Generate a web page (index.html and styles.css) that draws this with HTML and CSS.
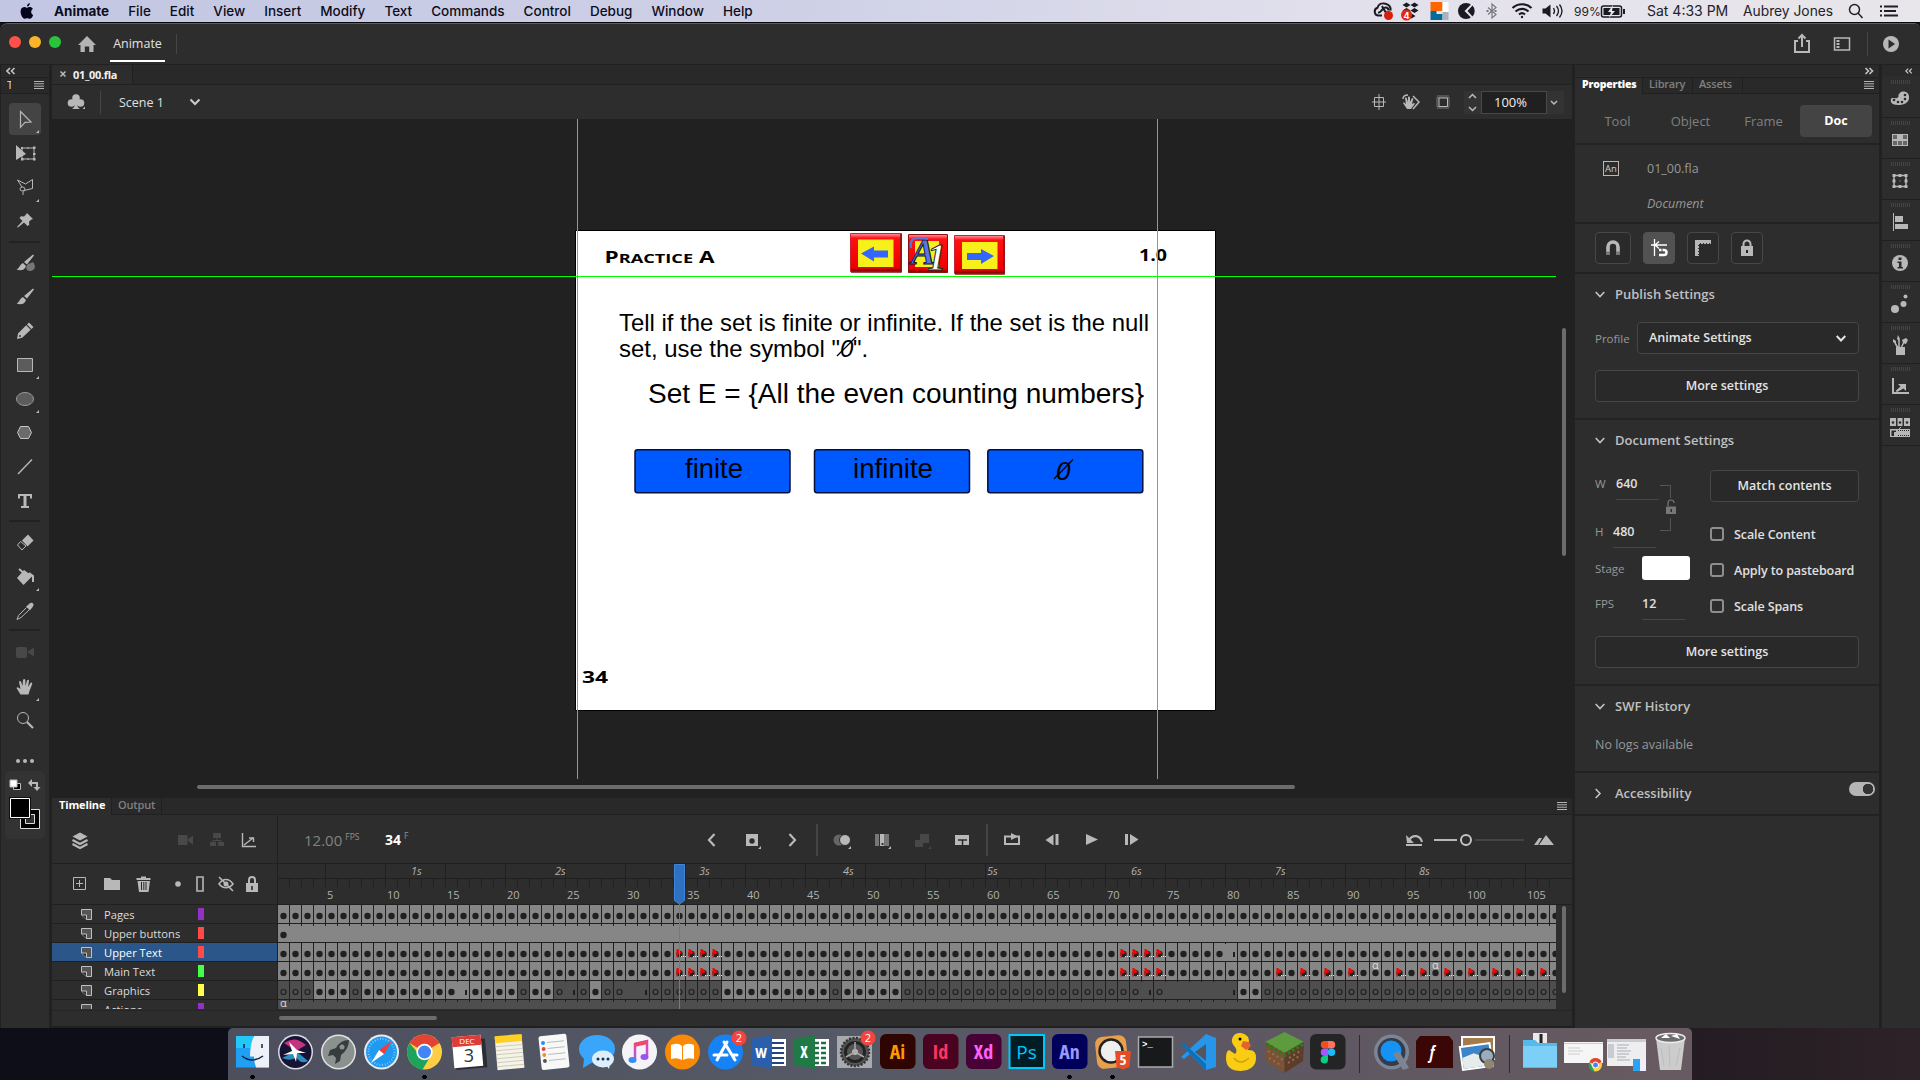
FILE: index.html
```html
<!DOCTYPE html>
<html lang="en">
<head>
<meta charset="utf-8">
<title>Animate</title>
<link rel="stylesheet" href="styles.css">
</head>
<body>
<header class="menubar">
  <svg class="apple" width="14" height="18" viewBox="0 0 14 18"><path fill="#05051c" d="M9.8 1C8.200 1.300 6.900 2.800 7 4.600 8.700 4.500 10 2.800 9.800 1zM7.200 5.800C6.300 5.800 5.400 5 4.200 5 2 5.100.6 7 .6 9.600.6 12.900 2.600 16.800 4.600 16.800 5.600 16.800 6 16.200 7.200 16.200 8.500 16.200 8.800 16.800 9.800 16.800 11.300 16.800 12.700 14.500 13.200 12.900 10.700 11.800 10.500 8.200 12.900 6.900 12 5.700 10.900 5.100 9.900 5.100 8.700 5.100 8 5.800 7.200 5.800z"/></svg>
  <nav class="menus"><b>Animate</b><span>File</span><span>Edit</span><span>View</span><span>Insert</span><span>Modify</span><span>Text</span><span>Commands</span><span>Control</span><span>Debug</span><span>Window</span><span>Help</span></nav>
  <div class="status">
    <svg width="262" height="22" viewBox="0 0 262 22" fill="none" stroke="#1a1a22" stroke-width="2">
      <path d="M9 15.500H5.500a4 4 0 0 1-1-7.800c1-3.500 4.500-5 8-4 4 1 5.500 4 5 7M5 12.500c3 1 4-5 7.500-5 2 0 3 1.500 3 3M9 6q3 6 5 7"/><circle cx="15.500" cy="15.500" r="4.500" fill="#d81e06" stroke="none"/>
      <g transform="translate(-3.500 0)">
      <g stroke="none" fill="#1a1a22"><path d="M33 5l4-2.500L41 5l-4 2.500zM41 5l4-2.500L49 5l-4 2.500zM33 10.500L37 8l4 2.500-4 2.500zM41 10.500L45 8l4 2.500-4 2.500zM38 16l4-2.500 4 2.500-4 2.500z"/><circle cx="37" cy="15" r="5.500" fill="#e0281a"/>
      <path fill="#dfe6ec" d="M61 2h18v18H61z"/><path fill="#f60" d="M61 2h12v9H61z"/><path fill="#056a9c" d="M61 11h6v9h-6zM67 14h6v6h-6z"/><path fill="#fff" d="M73 2h6v10h-6z"/><path fill="#a9b3bd" d="M73 12h6v8h-6z"/>
      <circle cx="96.500" cy="11" r="8"/><path fill="#e6e3ec" d="M103 3l-8 8 8 8 2-8z"/><path fill="#1a1a22" d="M103 5.500L98 11l5 5.500a8 8 0 0 0 0-11z"/></g>
      <path stroke="#777782" stroke-width="1.200" d="M118.500 7.500l8 7-4 3.500V4l4 3.500-8 7"/><path stroke="#777782" stroke-dasharray="2 2" d="M117 11h12"/>
      <path stroke-width="2.200" d="M143 8c5.500-5 14-5 19 0M146 11.500c4-3.500 9.500-3.500 13 0M149.500 14.500c2-1.700 4-1.700 6 0"/><circle cx="152.500" cy="17" r="1.200" fill="#1a1a22" stroke="none"/>
      <path stroke="none" fill="#1a1a22" d="M173 8.500h3l5-4v13l-5-4h-3z"/><path stroke-width="1.300" d="M184 8q2 3 0 6M187 6q4 5 0 10M190 4.500q5 6.500 0 13"/>
      <rect x="232" y="6" width="20" height="11" rx="2" stroke-width="1.500"/><rect x="234" y="8" width="16" height="7" fill="#1a1a22" stroke="none"/><path stroke="none" fill="#e9e6ee" d="M243.500 5l-5 7h3l-2 6 6-7h-3z"/><path d="M254.500 9v5"/>
      </g>
      <text x="33.500" y="18.500" class="tinybadge">4</text><text x="201" y="15.500" class="pct">99%</text>
    </svg>
    <span class="clock">Sat 4:33 PM</span><span class="user">Aubrey Jones</span>
    <svg width="52" height="22" viewBox="3 0 52 22" fill="none" stroke="#1f1f26" stroke-width="1.500"><circle cx="9.500" cy="9.500" r="5"/><path d="M13 13l4.500 5"/><g stroke-width="2"><path d="M35 6.500h2M39 6.500h14M35 11h2M39 11h12M35 15.500h2M39 15.500h14"/></g></svg>
  </div>
</header>

<main class="window">
  <div class="titlebar">
    <i class="light red"></i><i class="light amber"></i><i class="light green"></i>
    <svg class="home" width="18" height="16" viewBox="0 0 18 16"><path fill="#b4b4b4" d="M9 0l9 9h-2.500v7h-4.300v-5.500H6.800V16H2.500V9H0z"/></svg>
    <span class="apptab">Animate</span><i class="vline"></i>
    <svg class="titleright" width="110" height="24" viewBox="0 0 110 24" fill="none" stroke="#b8b8b8" stroke-width="2"><path d="M6 9H3v11h14V9h-3M10 15V3M6.500 6.500L10 3l3.500 3.500"/><path stroke-width="1.500" d="M42.500 6h15v12h-15z"/><path stroke="#b8b8b8" stroke-width="3" stroke-dasharray="2 1" d="M46 8v8"/><path stroke="#444" stroke-width="1" d="M75.500 0v24"/><circle cx="99" cy="12" r="8" fill="#b8b8b8" stroke="none"/><path fill="#2b2b2b" stroke="none" d="M96.500 7.500l6.500 4.500-6.500 4.500z"/></svg>
  </div>

  <div class="body">
    <aside class="tools">
      <div class="strip"><svg width="10" height="8" viewBox="0 0 10 8" class="st2"><path d="M4 1L1 4l3 3M8.500 1l-3 3 3 3"/></svg></div>
      <div class="tooltab"><span>T</span><svg width="10" height="8" viewBox="0 0 10 8" class="burger"><path d="M0 .5h10M0 2.800h10M0 5.200h10M0 7.500h10"/></svg></div>
      <div class="toollist">
        <svg class="tool on" viewBox="1 1 32 32"><path class="l" stroke="#fff" stroke-width="1.200" d="M12.500 9.500l10.500 10.500-6 .3-4.500 5z"/><path class="f" d="M31 28v3h-3z"/></svg>
        <svg class="tool" viewBox="0 0 34 34"><path class="f" d="M8 8l10 9-10 6z"/><path class="l" d="M14 11h12v11H14zM20 10v2M20 21v2"/><path class="f" d="M13 10h2v2h-2zM25 9.500h2.500V12H25zM25 16h2.500v2H25zM13 21h2.500v2.500H13zM25 21h2.500v2.500H25z"/></svg>
        <svg class="tool" viewBox="0 0 34 34"><path class="l" d="M14 16L9.500 9l8 4 7-4.500v9L14 20a2.500 2 0 1 1 3-2c0 2-3 3-2 6"/><path class="f" d="M31 28v3h-3z"/></svg>
        <svg class="tool" viewBox="0 1 34 34"><path class="f" d="M19 9l6 6-2 .8-2 2 .3 3-1.800 1.200-3.500-3.500-6 5-1-.5 5.500-6-3-3 1.500-1.700 3 .2 2-2z"/></svg>
        <i class="sep"></i>
        <svg class="tool" viewBox="0 0 34 34"><path fill="#777" d="M25 16c4 5 1 9-3 9s-5-4-2-7c2-1 4-1 5-2z"/><path class="f" d="M25 8.500l1 1-7 9-3-2.500zM15 17l3 3c-1 4-5 5-9.500 3.500 3-1 3-5 6.500-6.500z"/></svg>
        <svg class="tool" viewBox="0 0 34 34"><path class="f" d="M25 8.500l1 1-7 9-3-2.500zM15 17l3 3c-1 4-5 5-9.500 3.500 3-1 3-5 6.500-6.500z"/></svg>
        <svg class="tool" viewBox="0 0 34 34"><path class="f" d="M21 8.500l4.500 4.500-2 2-4.500-4.500zM18.200 11.300l4.500 4.500-8.500 8L9 25l1-5.500z"/><circle cx="12" cy="22" r="1" fill="#333"/></svg>
        <svg class="tool" viewBox="0 0 34 34"><path fill="#5c5c5c" stroke="#b8b8b8" d="M9.500 10.500h15v13h-15z"/><path class="f" d="M31 28v3h-3z"/></svg>
        <svg class="tool" viewBox="0 0 34 34"><ellipse cx="17" cy="17" rx="8.500" ry="6.500" fill="#5c5c5c" stroke="#9a9a9a"/><path class="f" d="M31 28v3h-3z"/></svg>
        <svg class="tool" viewBox="0 0 34 34"><path fill="#6b6b6b" stroke="#c4c4c4" d="M9.500 16.500l3-6h8l3 6-3 6h-8z"/></svg>
        <svg class="tool" viewBox="0 0 34 34"><path class="l" stroke-width="1.400" d="M10 24L24 9.500"/></svg>
        <svg class="tool" viewBox="0 0 34 34"><path class="f" d="M10 10h14v4.500h-2V12h-3.500v10h2.500v2h-8v-2h2.500V12H12v2.500h-2z"/></svg>
        <i class="sep"></i>
        <svg class="tool" viewBox="0 0 34 34"><path class="f" d="M20 9.500l5.500 6-6 6-5.500-6z"/><path class="l" d="M12.500 16.500L9.500 20l4.500 5 4-4z"/></svg>
        <svg class="tool" viewBox="0 -1 34 34"><path class="f" d="M16 10l8.500 6-9 9L9 18z"/><path class="l" stroke-width="2" d="M11 9l6 5M21 13l4 3v6"/><path class="f" d="M31 28v3h-3z"/></svg>
        <svg class="tool" viewBox="0 -1 34 34"><path class="f" d="M18 12.500l1.500-1 2-2c3-2 5 1 3.500 3l-2 2.500-1 1.500z"/><path class="l" d="M18.500 13.500l-8 8-1.500 4 4-2 8-7.500"/></svg>
        <i class="sep big"></i>
        <svg class="tool" viewBox="0 0 34 34"><rect x="8" y="12" width="11" height="11" rx="2" fill="#484848"/><path fill="#484848" d="M19 17l7-4.500v9z"/></svg>
        <svg class="tool" viewBox="0 -1 34 34"><path class="f" d="M12.500 24.500L8.500 18c1-1.500 2 0 4 1L11 12c.5-1.500 1.700-1.200 2.200 0l1.300 4L15 10c.5-1.500 2-1.500 2.300 0l.2 6 1.500-5.500c.6-1.300 2-1 2 .5L20 17l2.500-4c1-1 2.200 0 1.600 1.300L21.500 21l-1 3.500z"/><path class="f" d="M31 28v3h-3z"/></svg>
        <svg class="tool" viewBox="0 0 34 34"><circle class="l" cx="15" cy="15" r="5.500"/><path class="l" stroke-width="2.200" d="M19 19l6 6"/></svg>
        <svg class="tool" viewBox="0 0 34 34"><g class="f"><circle cx="10" cy="24" r="2"/><circle cx="17" cy="24" r="2"/><circle cx="24" cy="24" r="2"/></g></svg>
      </div>
      <svg class="colors" width="40" height="68" viewBox="0 0 40 68"><path fill="#000" stroke="#bbb" d="M8.500 12.500h7v6h-7z"/><path fill="#fff" stroke="#bbb" d="M5 9h7v7H5z"/><path class="l" stroke-width="2" d="M26 12h6v7"/><path class="f" d="M27 8v8l-4-4zM28.500 16h7l-3.500 4z"/><path fill="#000" stroke="#ddd" d="M15.500 38.500h19v19h-19z"/><path fill="#333" stroke="#ddd" d="M20.500 43.500h9v9h-9z"/><path fill="#000" stroke="#111" stroke-width="3" d="M5.500 27.500h19v19h-19z"/><path fill="#000" stroke="#fff" d="M5.500 27.500h19v19h-19z"/></svg>
    </aside>

    <section class="center">
      <div class="doctabs"><div class="doctab"><svg width="6" height="6" viewBox="0 0 6 6"><path stroke="#bbb" stroke-width="1.500" d="M.5.500l5 5M5.500.500l-5 5"/></svg><b>01_00.fla</b></div></div>
      <div class="scenebar">
        <svg width="20" height="20" viewBox="0 0 20 20" class="club"><g class="f"><circle cx="10" cy="6" r="3.800"/><circle cx="5.500" cy="11" r="3.800"/><circle cx="14.500" cy="11" r="3.800"/><path d="M9 8h2c0 5 0 7 3 9H6c3-2 3-4 3-9zM19 14.500V17h-2.500z"/></g></svg>
        <i class="vline"></i><span class="scene">Scene 1</span>
        <svg width="12" height="8" viewBox="0 0 12 8"><path fill="none" stroke="#ccc" stroke-width="2" d="M1.500 1.500L6 6l4.500-4.500"/></svg>
        <svg class="sceneicons" width="86" height="24" viewBox="0 0 86 24"><path class="l" d="M8.500 7.500h9v9h-9zM13 4v16M6 12h14"/><path class="f" d="M41 19l-4-6c1-1 2 0 3 1l-1-6c1-1 2 0 2 1l1 3V7c1-1 2 0 2 1v4l2-4c1 0 2 1 1 2l-1 4 2-1c1 0 1 1 0 2l-3 4z"/><path class="l" stroke-width="1.500" d="M37 9q0-4 5-4M47 6l6 6-6 7"/><path stroke="#777" stroke-width="3" stroke-dasharray="1 1" fill="none" d="M71.500 6.500h11v11h-11z"/><path class="l" d="M73 8h8.500v8.500H73z"/></svg>
        <div class="zoombox"><svg width="17" height="23" viewBox="0 0 17 23"><path fill="none" stroke="#bbb" stroke-width="1.500" d="M5 7l3.500-3.500L12 7M5 16l3.500 3.500L12 16"/></svg><span>100%</span><svg width="17" height="23" viewBox="0 0 17 23"><path fill="none" stroke="#bbb" stroke-width="1.500" d="M4 10l3 3 3-3"/></svg></div>
      </div>
      <svg class="pasteboard" width="1520" height="677" viewBox="52 119 1520 677">
        <defs><linearGradient id="bev" x1="0" y1="0" x2="0" y2="1"><stop offset="0" stop-color="#f9a"/><stop offset=".12" stop-color="#f11"/><stop offset=".9" stop-color="#e00"/><stop offset="1" stop-color="#700"/></linearGradient></defs>
        <path fill="#fff" stroke="#000" d="M575.500 230.500h640v480h-640z"/>
        <g class="copper"><text x="604.500" y="263" textLength="110" lengthAdjust="spacingAndGlyphs" font-size="15.500">P<tspan font-size="12.500">RACTICE</tspan> A</text><text x="1139" y="261" font-size="15.500" textLength="28" lengthAdjust="spacingAndGlyphs">1.0</text><text x="582" y="682.500" font-size="16" textLength="26" lengthAdjust="spacingAndGlyphs">34</text></g>
        <g>
          <path fill="url(#bev)" stroke="#c23" d="M850.500 233.500h51v38h-51z"/><path stroke="#811" stroke-width="1.500" d="M901 234v38h-50" fill="none"/><path fill="#f7f01a" d="M858 239.500h35.500v27.500H858z"/><path fill="#36f" d="M861 253.500l13-7v4h14v7h-14v4z"/>
          <path fill="url(#bev)" stroke="#811" d="M908.500 234.500h39v38h-39z"/><path fill="#f7f01a" d="M915 241h24v26h-24z"/>
          <text class="swash" x="911" y="264" font-size="36" textLength="24" lengthAdjust="spacingAndGlyphs">A</text><text class="swash one" x="927" y="270" font-size="38">1</text>
          <path fill="none" stroke="#5b76e0" stroke-width="2" d="M911 248q-2-11 9-10l8 1"/>
          <path fill="url(#bev)" stroke="#c23" d="M954.500 235.500h50v38h-50z"/><path stroke="#811" stroke-width="1.500" d="M1004 236v38h-49" fill="none"/><path fill="#f7f01a" d="M962 242h35.500v27H962z"/><path fill="#36f" d="M994 256l-13-7v4h-14v7h14v4z"/>
        </g>
        <g class="helv"><text x="619" y="331" font-size="24" textLength="530" lengthAdjust="spacingAndGlyphs">Tell if the set is finite or infinite. If the set is the null</text>
          <text x="619" y="357" font-size="24" textLength="221" lengthAdjust="spacingAndGlyphs">set, use the symbol "</text><text x="840" y="357" font-size="24" class="it">0</text><text x="853" y="357" font-size="24">".</text><path stroke="#000" stroke-width="1.300" d="M837 356l19-19"/>
          <text x="648" y="402.500" font-size="27" textLength="496" lengthAdjust="spacingAndGlyphs">Set E = {All the even counting numbers}</text>
          <g fill="#0058ff" stroke="#03103c" stroke-width="1.500"><rect x="635" y="449.800" width="155" height="43" rx="2.500"/><rect x="814.500" y="449.800" width="155" height="43" rx="2.500"/><rect x="987.800" y="449.800" width="155" height="43" rx="2.500"/></g>
          <text x="685" y="477.500" font-size="27" textLength="58" lengthAdjust="spacingAndGlyphs">finite</text><text x="853" y="477.500" font-size="27" textLength="80" lengthAdjust="spacingAndGlyphs">infinite</text><text x="1056" y="479.500" font-size="26" class="it">0</text><path stroke="#000" stroke-width="1.300" d="M1054 479l19-19.500"/>
        </g>
        <path stroke="#0f0" fill="none" d="M577.500 119v660M1157.500 119v660M52 276.500h1504"/>
        <g fill="#6c6c6c"><rect x="1562" y="328" width="4" height="228" rx="2"/><rect x="197" y="785" width="1098" height="4" rx="2"/></g>
      </svg>
      <div class="timeline">
        <div class="tltabs"><b>Timeline</b><span>Output</span><svg width="10" height="8" viewBox="0 0 10 8" class="burger"><path d="M0 .5h10M0 2.800h10M0 5.200h10M0 7.500h10"/></svg></div>
        <div class="tlmain">
          <div class="tlleft">
            <svg class="tlicons" width="225" height="48" viewBox="52 815 225 48"><path class="f" d="M72.500 836.500l7.500-4 7.500 4-7.500 4z"/><path class="l" stroke-width="2" d="M72.500 840l7.500 4 7.500-4M72.500 844l7.500 4 7.500-4"/><g fill="#484848"><path d="M178 835h9.500v10H178zM187 840l6-4.500v9.500zM213 833h8v5h-8zM210 842h6v4h-6zM218 842h6v4h-6z"/></g><path stroke="#484848" d="M217 838v3M213 842v-1.500h8v1.500" fill="none"/><path class="l" stroke-width="1.400" d="M242.500 833v13.500H256M244 845l9-7M249 838h4.500v4"/></svg>
            <svg class="tlicons" width="225" height="40" viewBox="52 864 225 40"><path class="l" d="M73.500 877.500h12v12h-12zM79.500 880v7M76 883.500h7"/><path class="f" d="M104 878h6l2 2h8v10h-16zM136.500 878h14v2h-14zM141 876.500h5v2h-5zM137.500 881h12.500l-1.500 11h-9.500z"/><path stroke="#2b2b2b" d="M141.500 882v8M143.800 882v8M146 882v8"/><circle class="f" cx="178" cy="884" r="2.800"/><path class="l" stroke-width="1.600" d="M197 877h6v14h-6z"/><path class="l" stroke-width="1.600" d="M219 884c4-6 10-6 14 0-4 5-10 5-14 0zM219 877l14 14"/><circle class="f" cx="226" cy="884" r="2.500"/><path class="f" d="M246 883h12v9h-12z"/><path class="l" stroke-width="2" d="M249 883v-3a3 3 0 0 1 6 0v3"/><path fill="#222" d="M251.300 886h1.500v4h-1.500z"/></svg>
            <div class="layers" id="layers"></div>
          </div>
          <div class="tlright">
            <div class="tlbar">
              <span class="fps">12.00<sup>FPS</sup></span><span class="cur">34<sup>F</sup></span>
              <svg class="ctl" width="460" height="48" viewBox="692 815 460 48"><path class="l" stroke-width="2.200" d="M714.500 834l-5.500 6 5.500 6M789.500 834l5.500 6-5.500 6"/><path class="f" d="M746 834h12v12h-12zM761 846v3h-3zM851 846v3h-3zM891 846v3h-3z"/><circle cx="752" cy="841" r="2.700" fill="#2b2b2b"/><path stroke="#444" stroke-width="2" d="M817 824v32M987 824v32"/><circle cx="839" cy="840" r="5.500" fill="#666"/><circle cx="845" cy="840" r="5.500" class="f" stroke="#2b2b2b"/><path fill="#777" d="M875 834h4v12h-4zM885 834h4v12h-4z"/><path class="f" d="M880 834h4.500v12H880z"/><path fill="#333" d="M881.500 843h2v2h-2z"/><path fill="#484848" d="M915 840h8v7h-8zM920 834h9v9h-9zM931 846v3h-3z"/><path class="f" d="M955 835h14v10h-14z"/><path fill="none" stroke="#2b2b2b" stroke-width="1.500" d="M958 840h9M962.500 840v5"/><path class="l" stroke-width="2" d="M1011 836.500h-6v7.500h14v-7.500h-6"/><path class="f" d="M1011 833l7 3.500-7 3.500zM1045.500 840l8-5.500v11zM1055.500 834h3v11h-3zM1086 834l12 5.500-12 5.500zM1125 834h3v11h-3zM1130 834l8.500 5.500-8.500 5.500z"/></svg>
              <svg class="zoomctl" width="180" height="48" viewBox="1392 815 180 48"><path class="l" stroke-width="2.200" d="M1409 840c4-6 11-5 13 2"/><path class="f" d="M1406 835l1 8h7zM1406 844h16v2h-16z"/><path stroke="#b8b8b8" stroke-width="2" d="M1434 840h23"/><path stroke="#444" stroke-width="2" d="M1475 840h49"/><circle cx="1466" cy="840" r="5" fill="none" stroke="#c4c4c4" stroke-width="2"/><path class="f" d="M1534 845l5-7h3l-4 7zM1539 845l7-10 8 10z"/></svg>
            </div>
            <svg id="frames" width="1294" height="147" viewBox="278 863 1294 147"></svg>
          </div>
        </div>
        <div class="tlfoot"><i></i></div>
      </div>
    </section>

    <aside class="props">
      <div class="strip right"><svg width="10" height="8" viewBox="0 0 10 8" class="st2"><path d="M1.500 1l3 3-3 3M5.500 1l3 3-3 3"/></svg></div>
      <div class="ptabs"><b>Properties</b><span>Library</span><span class="as">Assets</span><svg width="10" height="8" viewBox="0 0 10 8" class="burger"><path d="M0 .5h10M0 2.800h10M0 5.200h10M0 7.500h10"/></svg></div>
      <div class="sect seg"><span>Tool</span><span>Object</span><span>Frame</span><b>Doc</b></div>
      <div class="sect docinfo"><i class="an">An</i><div><p>01_00.fla</p><em>Document</em></div></div>
      <div class="sect snaps">
        <span class="wide"><svg width="34" height="30" viewBox="0 0 34 30"><path class="l" stroke-width="3.600" d="M12 21v-7a5 5 0 0 1 10 0v7"/><path fill="#777" d="M10 18.500h4V22h-4zM20 18.500h4V22h-4z"/></svg></span>
        <span class="act"><svg width="30" height="30" viewBox="0 0 30 30" fill="none" stroke="#fff"><path d="M10.500 6v17M7 12h16M15 8.500L11 12l4 3.500" stroke-width="1.300"/><path stroke-width="2.500" d="M15 17h5a2.500 2.500 0 0 1 0 5h-5" stroke-dasharray="2.500 1 20"/></svg></span>
        <span><svg width="30" height="30" viewBox="0 0 30 30"><path class="f" d="M7 7h16v4H11v12H7z"/><path stroke="#333" stroke-dasharray="1 2" d="M12 10.500h11M10.500 12v11"/></svg></span>
        <span><svg width="30" height="30" viewBox="0 0 30 30"><path class="f" d="M9 13h12v10H9z"/><path class="l" stroke-width="2" d="M11.500 13v-2a3.500 3.500 0 0 1 7 0v2"/><path fill="#222" d="M14 17h2v3h-2z"/></svg></span>
      </div>
      <div class="sect pub">
        <h3><svg width="10" height="7" viewBox="0 0 10 7" class="st2"><path d="M.7 1L5 5.500 9.300 1"/></svg>Publish Settings</h3>
        <div class="profile"><label>Profile</label><div class="btn select">Animate Settings<svg width="10" height="7" viewBox="0 0 10 7"><path fill="none" stroke="#e4e4e4" stroke-width="2" d="M.7 1L5 5.500 9.300 1"/></svg></div></div>
        <div class="btn">More settings</div>
      </div>
      <div class="sect docset">
        <h3><svg width="10" height="7" viewBox="0 0 10 7" class="st2"><path d="M.7 1L5 5.500 9.300 1"/></svg>Document Settings</h3>
        <div class="fields">
          <div class="dims">
            <div class="dim"><label>W</label><span>640</span></div><div class="dim"><label class="h">H</label><span>480</span></div>
            <svg width="18" height="48" viewBox="0 0 18 48"><path fill="none" stroke="#555" d="M0 1.500h10.500V14M10.500 34v12.500H0"/><path fill="#777" d="M6 22.500h10V30H6z"/><path fill="none" stroke="#777" stroke-width="1.200" d="M8 22v-3a3 3 0 0 1 6 0"/><path fill="#2b2b2b" d="M10.500 25h1.500v3h-1.500z"/></svg>
          </div>
          <div class="pair"><label>Stage</label><i class="swatch"></i></div>
          <div class="pair"><label>FPS</label><span class="under">12</span></div>
          <div class="opts"><div class="btn">Match contents</div><div class="chk c1"><i></i>Scale Content</div><div class="chk"><i></i>Apply to pasteboard</div><div class="chk"><i></i>Scale Spans</div></div>
        </div>
        <div class="btn">More settings</div>
      </div>
      <div class="sect swf"><h3><svg width="10" height="7" viewBox="0 0 10 7" class="st2"><path d="M.7 1L5 5.500 9.300 1"/></svg>SWF History</h3><p>No logs available</p></div>
      <div class="sect acc"><h3><svg width="10" height="11" viewBox="0 0 10 11" class="st2"><path d="M.7 1L5 5.500.7 10"/></svg>Accessibility</h3><i class="toggle"></i></div>
    </aside>

    <aside class="dockstrip">
      <div class="strip right"><svg width="8" height="8" viewBox="0 0 10 8" class="st2"><path d="M4 1L1 4l3 3M8.500 1l-3 3 3 3"/></svg></div>
      <div class="cell"><svg viewBox="0 0 20 20"><path class="f" d="M10 4c0-2 8-3 9 3 1 8-7 9-11 9-6 0-8-3-7-6 1-2 4 0 6-1 3-1 0-3 3-5z"/><g fill="#2b2b2b"><circle cx="4" cy="11" r="1.300"/><circle cx="8" cy="13" r="1.300"/><circle cx="12" cy="13" r="1.300"/><circle cx="15" cy="10" r="1.300"/><circle cx="15" cy="6" r="1.300"/></g></svg></div>
      <div class="cell"><svg viewBox="0 0 20 20"><path class="f" d="M2 4h16v12H2z"/><path fill="#666" d="M3 5h4v4H3zM13 5h4v4h-4zM3 11h4v4H3zM8 11h4v4H8zM13 11h4v4h-4z"/></svg></div>
      <div class="cell"><svg viewBox="0 0 20 20"><path class="l" stroke-width="1.500" d="M4 4.500h12v11H4z"/><path class="f" d="M2.500 3h3v3h-3zM8.500 3h3v3h-3zM14.500 3h3v3h-3zM2.500 8.500h3v3h-3zM14.500 8.500h3v3h-3zM2.500 14h3v3h-3zM8.500 14h3v3h-3zM14.500 14h3v3h-3zM9.500 9.500h1v1h-1z"/></svg></div>
      <div class="cell"><svg viewBox="0 0 20 20"><path class="f" d="M3 1h1v18H3zM5 4h8v6H5zM5 12h13v5H5z"/></svg></div>
      <div class="cell"><svg viewBox="0 0 20 20"><circle class="f" cx="10" cy="10" r="8"/><path fill="#2b2b2b" d="M8.500 4.500h3v2.500h-3zM7.500 8.500h4V14h1.500v1.500H7.500V14H9v-4H7.500z"/></svg></div>
      <div class="cell"><svg viewBox="0 0 20 20"><g class="f"><circle cx="5" cy="15" r="4"/><circle cx="13.500" cy="10" r="3"/><circle cx="15.500" cy="2.500" r="2"/></g></svg></div>
      <div class="cell"><svg viewBox="0 0 20 20"><path class="f" d="M6 12h9v8H6zM8 0l2 4-1 2-2-2zM3 4l3 2 0 3-3-2zM12 5l4-2 2 2-2 4-3-1z"/><path class="l" stroke-width="1.500" d="M9 5v8M5 8l3 5M14 7l-3 6"/></svg></div>
      <div class="cell"><svg viewBox="0 0 20 20"><path class="l" stroke-width="2" d="M3 2v15h16"/><path class="f" d="M8 8h8v7l-2.500-2.500L7 16l-1.500-1 5-4.500z"/></svg></div>
      <div class="cell"><svg viewBox="0 0 20 20"><path class="f" d="M0 1h6v8H0zM7.500 1h5v8h-5zM14 1h6v8h-6z"/><g fill="#2b2b2b"><circle cx="3" cy="5.500" r="1.300"/><circle cx="10" cy="5.500" r="1.300"/><circle cx="17" cy="5.500" r="1.300"/></g><path class="f" d="M0 12h20v8H0z"/><path fill="#2b2b2b" d="M1.500 13.500H6V15H4v4H1.500z"/><path class="l" d="M5 16l6-6"/><path stroke="#2b2b2b" stroke-dasharray="1 1" d="M8 13.500h11M8 18.500h11"/></svg></div>
    </aside>
  </div>
</main>

<footer class="desktop">
  <div class="dock">
    <svg class="app run" viewBox="0 0 43 52"><path fill="#1fa0f5" d="M5 6h33v31.500H5z"/><path fill="#22c8f8" d="M5 6h17v12H5z"/><path fill="#eef1f8" d="M23 6h15v31.500H25q-2-6-2-11h-4Q19 14 23 6z"/><path fill="none" stroke="#10203c" stroke-width="1.500" d="M13 14v4M31 14v4M11 26q10 8 21 0"/></svg>
    <svg class="app" viewBox="0 0 43 52"><circle cx="21.500" cy="22" r="17.500" fill="#dcdce6"/><circle cx="21.500" cy="22" r="16" fill="#171334"/><path fill="#c2357e" d="M10 13q11-8 22 2l-10 6z"/><path fill="#2a8fc0" d="M8 28l14-7 12 10q-7 4-12-4-4 5-14 1z"/><path fill="#fff" d="M15 12l8 8 9 3-9 0-1 9-3-8-10 1 9-4z"/></svg>
    <svg class="app" viewBox="0 0 43 52"><circle cx="21.500" cy="22" r="17.500" fill="#e0e2e3"/><circle cx="21.500" cy="22" r="16" fill="#8a918f"/><path fill="#363d3f" d="M32 10q-9 0-13 8l-6 2-2 6 5-1 3 3-1 6 5-3 1-6q8-6 8-15z"/><circle cx="25" cy="17" r="2.500" fill="#8a918f"/></svg>
    <svg class="app" viewBox="0 0 43 52"><circle cx="21.500" cy="22" r="17.500" fill="#e8eaee"/><circle cx="21.500" cy="22" r="15.500" fill="#1f9af1"/><circle cx="21.500" cy="22" r="13" fill="none" stroke="#9ed6ff" stroke-dasharray=".7 2" stroke-width="2"/><path fill="#f23c36" d="M32 11L19 20l5 4z"/><path fill="#fff" d="M11 33l8-13 5 4z"/></svg>
    <svg class="app run" viewBox="0 0 43 52"><circle cx="21.500" cy="22" r="17.500" fill="#ffce44"/><path fill="#e44234" d="M21.500 22L6.500 13a17.500 17.500 0 0 1 30 0z"/><path fill="#1ca35c" d="M6.500 13a17.500 17.500 0 0 0 13 26.500L27 27l-8 1z"/><circle cx="21.500" cy="22" r="8.200" fill="#fff"/><circle cx="21.500" cy="22" r="6.500" fill="#4285f4"/></svg>
    <svg class="app" viewBox="0 0 43 52"><g transform="rotate(-5 21 22)"><path fill="#2a2d33" d="M9 10h31v29H9z"/><path fill="#fff" d="M7 6h29v31H7z"/><path fill="#dd3d38" d="M7 6h29v10H7z"/></g><text x="21" y="14" class="d" font-size="8" fill="#fff">DEC</text><text x="23" y="32" class="d" font-size="18" fill="#333">3</text></svg>
    <svg class="app" viewBox="0 0 43 52"><g transform="rotate(-5 21 22)"><path fill="#f5f2e7" d="M7 6h27v33H7z"/><path fill="#ffcf24" d="M7 5h27v7H7z"/><path stroke="#cfcabb" d="M7 15.500h27M7 19.500h27M7 23.500h27M7 27.500h27M7 31.500h27M7 35.500h27"/></g></svg>
    <svg class="app" viewBox="0 0 43 52"><g transform="rotate(-6 21 22)"><rect x="8" y="5" width="28" height="34" rx="2" fill="#f8f8f8"/><path stroke="#bbb" d="M16 12h17M16 18h17M16 24h17M16 30h17"/><circle cx="12" cy="12" r="2" fill="#2b8cf5"/><circle cx="12" cy="18" r="2" fill="#e84436"/><circle cx="12" cy="24" r="2" fill="#f0912c"/><circle cx="12" cy="30" r="2" fill="#555"/></g></svg>
    <svg class="app" viewBox="0 0 43 52"><ellipse cx="22" cy="19" rx="18" ry="14" fill="#39a5fb"/><path fill="#39a5fb" d="M9 28l-1 10 10-6z"/><ellipse cx="28" cy="29" rx="11" ry="8.500" fill="#dcefff"/><path fill="#dcefff" d="M31 35l3 4 1-5z"/><g fill="#20304a"><circle cx="23" cy="29" r="1.500"/><circle cx="28" cy="29" r="1.500"/><circle cx="33" cy="29" r="1.500"/></g></svg>
    <svg class="app" viewBox="0 0 43 52"><circle cx="21.500" cy="22" r="17.500" fill="#f4f4f8"/><path fill="none" stroke="#c850c8" stroke-width="2.500" d="M17 29V14l12-3v15"/><path fill="#f2466c" d="M16 13l14-3v4l-14 3z"/><ellipse cx="14.500" cy="30" rx="4" ry="3" fill="#3a8bf5"/><ellipse cx="26.500" cy="27" rx="4" ry="3" fill="#9a55f0"/></svg>
    <svg class="app" viewBox="0 0 43 52"><circle cx="21.500" cy="22" r="17.500" fill="#f98a06"/><path fill="#fff" d="M10 15q7-3 11 1v14q-5-3-11-1zM33 15q-7-3-11 1v14q5-3 11-1z"/></svg>
    <svg class="app" viewBox="0 0 43 52"><circle cx="21.500" cy="22" r="17.500" fill="#1583f6"/><path fill="none" stroke="#fff" stroke-width="3" stroke-linecap="round" d="M23 12L13 30M20 12l11 18M10 25h13M28 25h5"/><circle cx="35" cy="8" r="7.500" fill="#f4443e"/><text x="35" y="12" class="d" font-size="11" fill="#fff">2</text></svg>
    <svg class="app" viewBox="0 0 43 52"><path fill="#fff" d="M22 9h17v27H22z"/><path stroke="#24457f" stroke-width="2" d="M24 13h13M24 18h13M24 23h13M24 28h13M24 33h13"/><path fill="#2a5fae" d="M4 9l21-4v34L4 35z"/><text x="14" y="28" class="d b" font-size="15" fill="#fff">W</text></svg>
    <svg class="app" viewBox="0 0 43 52"><path fill="#fff" d="M22 9h17v27H22z"/><path stroke="#1e7145" stroke-width="2.500" stroke-dasharray="5 2" d="M24 13h13M24 18h13M24 23h13M24 28h13M24 33h13"/><path fill="#1f7a46" d="M4 9l21-4v34L4 35z"/><text x="14" y="28" class="d b" font-size="16" fill="#fff">X</text></svg>
    <svg class="app" viewBox="0 0 43 52"><path fill="#a7abad" d="M4 6h35v32H4z"/><circle cx="22" cy="22" r="14" fill="#555" stroke="#333" stroke-width="2.500" stroke-dasharray="2 1.500"/><circle cx="22" cy="22" r="9.500" fill="none" stroke="#222" stroke-width="3"/><circle cx="22" cy="22" r="3" fill="#bbb"/><path stroke="#aaa" stroke-width="1.500" d="M22 22V12M22 22l9 5M22 22l-9 5"/><circle cx="35" cy="8" r="7.500" fill="#f4443e"/><text x="35" y="12" class="d" font-size="11" fill="#fff">2</text></svg>
    <svg class="app" viewBox="0 0 43 52"><rect x="4" y="4" width="35.500" height="35" rx="6" fill="#2e0500"/><text x="21.500" y="29" class="d b" font-size="20" fill="#ff9a00">Ai</text></svg>
    <svg class="app" viewBox="0 0 43 52"><rect x="4" y="4" width="35.500" height="35" rx="6" fill="#49021f"/><text x="21.500" y="29" class="d b" font-size="20" fill="#ff3366">Id</text></svg>
    <svg class="app" viewBox="0 0 43 52"><rect x="4" y="4" width="35.500" height="35" rx="6" fill="#470137"/><text x="21.500" y="29" class="d b" font-size="20" fill="#ff61f6">Xd</text></svg>
    <svg class="app" viewBox="0 0 43 52"><rect x="4.500" y="5" width="34.500" height="33" fill="#001d26" stroke="#00c8ff" stroke-width="2"/><text x="21.500" y="29" class="d" font-size="19" fill="#00c8ff">Ps</text></svg>
    <svg class="app run" viewBox="0 0 43 52"><rect x="4" y="4" width="35.500" height="35" rx="6" fill="#00005b"/><text x="21.500" y="29" class="d b" font-size="20" fill="#9999ff">An</text></svg>
    <svg class="app run" viewBox="0 0 43 52"><rect x="5" y="6" width="31" height="32" rx="7" fill="#e8a04e" transform="rotate(-6 21 22)"/><circle cx="20" cy="21" r="11.500" fill="#efefef" stroke="#222" stroke-width="2.500"/><path fill="#e44d26" d="M24 21h16l-1.500 16-6.500 2.500-6.500-2.500z"/><text x="32" y="35" class="d b" font-size="15" fill="#fff">5</text></svg>
    <svg class="app" viewBox="0 0 43 52"><path fill="#18191a" stroke="#a9abad" stroke-width="1.500" d="M4.500 7h34v30h-34z"/><text x="8" y="17" font-size="9" fill="#fff" class="m">&gt;_</text></svg>
    <svg class="app" viewBox="0 0 43 52"><path fill="#2596ea" d="M29 4l10 4v29l-10 3-16-16-6 5-3-2 25-23z"/><path fill="#0f70b8" d="M4 15l3-2 22 21v6z"/><path fill="#54565f" d="M29 14v17L18 22z"/></svg>
    <svg class="app" viewBox="0 0 43 52"><path fill="#f8cd14" d="M12 9q2-7 9-6 9 1 8 12 0 4-2 5 10-1 9 9-1 11-15 12Q6 41 6 28q0-7 3-8l6 4q3-3 0-7-4-4-3-8z"/><path fill="#e5622a" d="M23 11l6 1 2 4-5 4-5-4z"/><circle cx="20" cy="9" r="1.500"/><path fill="none" stroke="#d59c09" stroke-width="1.500" d="M14 28q6 8 15 0"/></svg>
    <svg class="app" viewBox="0 0 43 52"><path fill="#5d9b3e" d="M21.500 2L41 12 21.500 23 2 12z"/><path fill="#7a5236" d="M2 12l19.500 11v20L3 31z"/><path fill="#5d3c28" d="M41 12L21.500 23v20L40 31z"/><path fill="none" stroke="#3d7026" stroke-width="4" stroke-dasharray="3 2" d="M3 14l18.500 11L40 14"/><path fill="none" stroke="#96704d" stroke-width="2" stroke-dasharray="2 3" d="M5 21l15 9M6 28l13 8M25 33l13-8M26 28l13-8"/></svg>
    <svg class="app" viewBox="0 0 43 52"><rect x="4" y="4" width="35.500" height="35.500" rx="6" fill="#242424"/><path fill="#f24e1e" d="M22 11h-3.500a3.700 3.700 0 0 0 0 7.500H22z"/><path fill="#ff7262" d="M22 11h3.500a3.700 3.700 0 0 1 0 7.500H22z"/><path fill="#a259ff" d="M22 18.500h-3.500a3.700 3.700 0 0 0 0 7.500H22z"/><circle cx="25.500" cy="22.300" r="3.700" fill="#1abcfe"/><path fill="#0acf83" d="M22 26h-3.500a3.700 3.700 0 1 0 3.500 4z"/></svg>
    <i class="bar"></i>
    <svg class="app" viewBox="0 0 43 52"><circle cx="21.500" cy="22" r="17.500" fill="#7d8594"/><circle cx="21.500" cy="22" r="14" fill="#333b4c"/><circle cx="21" cy="21" r="10.500" fill="#1593f5"/><path fill="#7d8594" d="M23 24l6-3 10 17-6 2z"/></svg>
    <svg class="app" viewBox="0 0 43 52"><path fill="#3a0606" d="M7 6h29l4 5v27H3V11z"/><text x="19" y="29" class="d it b" font-size="17" fill="#fff">f</text></svg>
    <svg class="app" viewBox="0 0 43 52"><path fill="#a57b4b" stroke="#fff" stroke-width="2" d="M6 7h32v22H6z"/><g transform="rotate(-8 20 25)"><path fill="#3d85c8" stroke="#fff" stroke-width="2" d="M5 15h30v23H5z"/><path fill="#e4ecec" d="M6 26l12-3 16 8v6H6z"/></g><circle cx="31" cy="26" r="7" fill="#9aacbd" stroke="#3b3d40" stroke-width="2"/><circle cx="33" cy="34" r="5" fill="#8f8771"/></svg>
    <i class="bar"></i>
    <svg class="app" viewBox="0 0 43 52"><path fill="#e9e9e9" d="M14 3h14v12H14z"/><path stroke="#222" stroke-width="3" d="M22 4v9"/><path fill="#57b9ea" d="M4 10h12l3 3h19v25H4z"/><path fill="#7cd0f7" d="M4 16h34v21H4z"/></svg>
    <svg class="app" viewBox="0 0 43 52"><path fill="#f6f6f6" d="M2 12h39v21H2z"/><path stroke="#ccc" d="M2 13.500h39M6 18h12M6 21h15M6 24h12"/><circle cx="33.500" cy="35" r="6.500" fill="#ffce44"/><path fill="#e44234" d="M33.500 35l-6-3a6.500 6.500 0 0 1 12 0z"/><path fill="#1ca35c" d="M27.500 32a6.500 6.500 0 0 0 5 9.500z"/><circle cx="33.500" cy="35" r="3" fill="#4285f4" stroke="#fff"/></svg>
    <svg class="app" viewBox="0 0 43 52"><path fill="#eee" d="M2 9h39v27H2z"/><path fill="#c8ccd1" d="M2 9h39v3H2zM3 14h6v14H3z"/><path stroke="#aab" d="M12 15h12M12 18h10M12 21h14M12 24h12M12 27h9M12 30h13"/><path fill="#2aa2f6" d="M28 29h7v12h-7z"/><path fill="#eef" d="M35 29h6v12h-6z"/></svg>
    <svg class="app" viewBox="0 0 43 52"><path fill="#d8d8d8" opacity=".9" d="M7 8h29l-4 32H11z"/><ellipse cx="21.500" cy="8" rx="14.500" ry="4.500" fill="#6b6b70" stroke="#eee" stroke-width="1.500"/><path fill="#fff" d="M12 8l5-4 4 4zM22 6l6-2 3 5z"/><path stroke="#bcbcbc" d="M12 18l3 18M20 16l1 21M31 18l-4 18" fill="none"/></svg>
  </div>
</footer>
<script src="app.js"></script>
</body>
</html>
```
FILE: styles.css
```css
* { box-sizing: border-box; margin: 0; padding: 0; }
body { width: 1920px; height: 1080px; overflow: hidden; background: #14141b; font-family: "Open Sans", "Noto Sans", sans-serif; font-size: 13px; color: #e0e0e0; display: flex; flex-direction: column; }
svg { display: block; flex: none; }
i { display: block; font-style: normal; flex: none; }
.f { fill: #b8b8b8; }
.l { fill: none; stroke: #b8b8b8; }
.st2 path { fill: none; stroke: #c4c4c4; stroke-width: 1.600; }
.burger path { stroke: #b4b4b4; }
.vline { width: 1px; background: #454545; }

.menubar { height: 23px; flex: none; display: flex; align-items: center; padding: 0 20px 1px; background: linear-gradient(90deg, #c3c6e2, #cdd0e6 40%, #e2e0ec 70%, #e9e6ea); border-bottom: 1px solid #08080c; font: 14px/22px Inter, sans-serif; color: #0c0c20; }
.menus { display: flex; gap: 19px; margin-left: 20px; white-space: nowrap; font-size: 13.500px; font-weight: 500; }
.menus b { font-weight: 700; }
.status { margin-left: auto; display: flex; width: 527px; color: #22222a; white-space: nowrap; }
.clock { flex: none; padding-left: 12px; width: 108px; }
.user { flex: none; width: 105px; font-size: 13.800px; }
.pct { font-size: 12px; fill: #22222a; stroke: none; }
.tinybadge { font: 700 9px Inter, sans-serif; fill: #fff; stroke: none; text-anchor: middle; }

.window { height: 1005px; flex: none; background: #212121; display: flex; flex-direction: column; border-top: 1px solid #5d5d61; border-radius: 8px 6px 0 0; }
.titlebar { height: 40px; background: #2d2d2d; display: flex; align-items: center; padding-left: 9px; border-radius: 8px 6px 0 0; flex: none; }
.light { width: 12px; height: 12px; border-radius: 6px; margin-right: 8px; margin-top: -4px; }
.red { background: #ff5149; } .amber { background: #fbb42a; } .green { background: #27c43c; }
.home { margin-left: 9px; }
.apptab { width: 55px; margin-left: 14px; margin-bottom: 2px; text-align: center; color: #e2e2e2; line-height: 34px; border-bottom: 2px solid #fff; height: 38px; font-size: 12.500px; padding-top: 3px; }
.titlebar .vline { height: 20px; margin-left: 11px; }
.titleright { margin-left: auto; margin-right: 18px; }
.body { flex: 1; display: flex; margin-top: 1px; min-height: 0; }

.strip { height: 11px; background: #2a2a2a; display: flex; align-items: center; padding-left: 5px; margin-bottom: 1px; flex: none; }
.strip.right { justify-content: flex-end; padding-right: 7px; }
.tools { width: 48px; margin-left: 1px; background: #2d2d2d; display: flex; flex-direction: column; flex: none; }
.tooltab { height: 17px; background: #292929; border-bottom: 1px solid #202020; border-top: 1px solid #202020; display: flex; align-items: center; justify-content: space-between; padding: 0 5px 2px 6px; }
.tooltab span { width: 4px; overflow: hidden; font-size: 11px; line-height: 14px; }
.toollist { padding-top: 9px; display: flex; flex-direction: column; }
.tool { width: 34px; height: 34px; margin-left: 7px; }
.tool.on { background: #444; border-radius: 4px; width: 32px; height: 32px; margin: 0 0 2px 8px; }
.sep { width: 31px; height: 7px; margin-left: 8px; border-top: 2px solid #222; margin-top: 2px; margin-bottom: -2px; }
.sep.big { height: 8px; }
.colors { margin-left: 4px; background: #333; border-radius: 5px; }

.center { width: 1520px; margin-left: 3px; flex: none; display: flex; flex-direction: column; }
.doctabs { height: 19px; background: #292929; flex: none; }
.doctab { width: 81px; height: 19px; background: #2d2d2d; border-right: 1px solid #202020; display: flex; align-items: center; gap: 7px; padding: 0 0 1px 8px; font-size: 11px; color: #f2f2f2; letter-spacing: -.35px; white-space: nowrap; }
.scenebar { height: 34px; margin-top: 1px; background: #2d2d2d; display: flex; align-items: center; flex: none; }
.club { margin-left: 14px; }
.scenebar .vline { height: 23px; margin-left: 14px; }
.scene { width: 62px; margin: 0 8px 0 18px; font-size: 12.500px; }
.sceneicons { margin-left: auto; margin-right: 12px; }
.zoombox { display: flex; align-items: center; background: #333; width: 100px; margin-right: 8px; }
.zoombox span { width: 66px; height: 23px; border: 1px solid #484848; background: #202020; line-height: 20px; font-size: 13px; padding-left: 12px; color: #eee; }
.pasteboard { background: #212121; }
.helv { font-family: "Liberation Sans", Arial, sans-serif; fill: #000; }
.it { font-style: italic; }
.copper { font-family: "Open Sans", sans-serif; font-weight: 700; fill: #000; }
.swash { font-family: "Liberation Serif", serif; font-style: italic; font-weight: 700; fill: #5b76e0; stroke: #101030; stroke-width: 1; }
.one { fill: #fff; stroke: #222; }

.timeline { height: 229px; margin-top: 2px; background: #2d2d2d; display: flex; flex-direction: column; flex: none; }
.tltabs { height: 17px; background: #292929; border-bottom: 1px solid #202020; display: flex; align-items: center; font-size: 11px; line-height: 14px; flex: none; }
.tltabs b { width: 60px; padding-left: 7px; background: #2d2d2d; border-right: 1px solid #202020; color: #fff; height: 17px; letter-spacing: -.15px; }
.tltabs span { width: 50px; padding-left: 6px; border-right: 1px solid #202020; color: #808080; font-weight: 600; height: 17px; letter-spacing: -.15px; }
.tltabs svg { margin: 0 5px 0 auto; }
.tlmain { display: flex; height: 195px; flex: none; }
.tlleft { width: 226px; border-right: 1px solid #202020; }
.tlicons { box-sizing: content-box; border-bottom: 1px solid #202020; }
.layers { height: 104px; overflow: hidden; }
.layer { height: 18px; margin-bottom: 1px; display: flex; align-items: center; outline: 1px solid #202020; font-size: 11.200px; background: #2d2d2d; color: #dcdcdc; padding-left: 28px; }
.layer.sel { background: #2b5689; color: #fff; }
.layer span { width: 105px; margin-left: 11px; padding-top: 1px; margin-right: -11px; white-space: nowrap; }
.layer i { width: 6px; height: 12px; margin-top: -1px; }
.tlright { flex: 1; display: flex; flex-direction: column; }
.tlbar { height: 48px; display: flex; align-items: center; flex: none; padding-top: 1px; }
.fps { width: 81px; margin-left: 26px; color: #828282; font-size: 15px; white-space: nowrap; }
.cur { width: 40px; color: #fff; font-size: 14px; font-weight: 700; }
.tlbar sup { font-size: 8.500px; font-weight: 400; margin-left: 3px; color: #909090; vertical-align: 6px; line-height: 0; }
.ctl { margin: -1px 0 0 267px; }
.zoomctl { margin: -1px 0 0 auto; }
#frames text { font-size: 11px; fill: #b0b0b0; }
#frames .alpha { font-size: 11px; fill: #ddd; }
.tlfoot { flex: 1; padding: 5px 0 0 227px; border-bottom: 1px solid #202020; border-top: 1px solid #252525; }
.tlfoot i { width: 158px; height: 4px; border-radius: 2px; background: #6c6c6c; }

.props { width: 304px; margin-left: 3px; flex: none; display: flex; flex-direction: column; background: #2d2d2d; }
.props .strip { padding-right: 5px; }
.ptabs { height: 17px; background: #292929; border: solid #202020; border-width: 1px 0; display: flex; align-items: center; font-size: 11px; line-height: 12px; color: #808080; font-weight: 600; flex: none; letter-spacing: -.2px; }
.ptabs b { width: 68px; padding-left: 7px; color: #fff; background: #2d2d2d; border-right: 1px solid #202020; height: 16px; font-size: 10.500px; }
.ptabs span { width: 50px; padding-left: 6px; border-right: 1px solid #202020; height: 15px; }
.ptabs svg { margin: -1px 5px 0 auto; }
.sect { border-bottom: 2px solid #222; padding: 0 20px; flex: none; }
.seg { height: 51px; display: flex; align-items: center; padding: 5px 0 0 6px; color: #808080; font-size: 13px; }
.seg span, .seg b { width: 73px; text-align: center; }
.seg b { width: 72px; height: 32px; line-height: 32px; background: #444; color: #fff; border-radius: 4px; font-size: 12.500px; }
.docinfo { height: 79px; display: flex; padding: 13px 0 0 28px; color: #989898; }
.an { width: 16px; height: 15px; border: 1px solid #b8b8b8; font: 9.500px/13px "Open Sans", sans-serif; text-align: center; margin-top: 3px; color: #ccc; }
.docinfo div { margin-left: 28px; }
.docinfo p, .docinfo em { display: block; line-height: 22px; height: 35px; font-size: 12.500px; }
.snaps { height: 50px; display: flex; gap: 12px; padding-top: 8px; }
.snaps span { width: 32px; height: 32px; border: 1px solid #474747; border-radius: 4px; background: #2a2a2a; }
.snaps .wide { width: 36px; }
.snaps .act { background: #525252; border-color: #525252; }
h3 { font-size: 13px; line-height: 20px; font-weight: 600; color: #c0c0c0; display: flex; align-items: center; gap: 10px; white-space: nowrap; }
.btn { height: 32px; border: 1px solid #464646; border-radius: 4px; background: #292929; text-align: center; line-height: 30px; font-weight: 600; font-size: 12.500px; color: #e4e4e4; }
label { color: #989898; font-size: 11.500px; }
.pub { height: 146px; padding-top: 10px; }
.profile { display: flex; align-items: center; margin: 18px 0 16px; }
.profile label { width: 42px; }
.select { flex: 1; display: flex; align-items: center; justify-content: space-between; padding: 0 12px 0 11px; }
.docset { height: 266px; padding-top: 10px; }
.fields { display: grid; grid-template-columns: 115px 149px; grid-template-rows: 86px 28px 36px; margin: 20px 0 16px; }
.dims { display: grid; grid-template-columns: 65px 18px; grid-template-rows: 48px 38px; }
.dims svg { grid-column: 2; grid-row: 1 / 3; margin-top: 14px; }
.dim { display: flex; grid-column: 1; }
.dim label { width: 21px; line-height: 28px; }
.dim label.h { width: 18px; }
.dim span, .under { width: 43px; height: 30px; line-height: 28px; border-bottom: 1px solid #474747; font-weight: 600; font-size: 12.500px; flex: none; }
.pair { grid-column: 1; display: flex; align-items: center; }
.pair label { width: 47px; margin-top: -3px; }
.pair + .pair { padding-top: 6px; }
.swatch { width: 48px; height: 24px; background: #fff; border-radius: 3px; margin-top: -4px; }
.opts { grid-column: 2; grid-row: 1 / 4; }
.chk { height: 36px; display: flex; align-items: center; gap: 10px; font-weight: 600; font-size: 12.500px; letter-spacing: -.1px; white-space: nowrap; }
.chk.c1 { margin-top: 14px; }
.chk i { width: 14px; height: 14px; border: 2px solid #8e8e8e; border-radius: 3px; }
.swf { height: 87px; padding-top: 10px; }
.swf p { margin-top: 18px; line-height: 22px; font-size: 12.500px; color: #989898; }
.acc { height: 43px; padding: 10px 4px 0 20px; display: flex; justify-content: space-between; }
.acc h3 { height: 20px; }
.toggle { width: 26px; height: 14px; border-radius: 7px; background: radial-gradient(circle at 19px 7px, #333 5px, #b4b4b4 5.500px); margin-top: -1px; }
.dockstrip { width: 38px; margin-left: 3px; background: #2d2d2d; flex: none; }
.cell { height: 41px; border-bottom: 1px solid #202020; padding: 3px 9px 0; }
.cell::before { content: ""; display: block; width: 19px; height: 4px; background: repeating-linear-gradient(90deg, #444 0 1px, transparent 1px 2px); }
.cell svg { width: 20px; height: 20px; margin: 5px 0 0 -1px; }

.desktop { height: 52px; flex: none; background: linear-gradient(90deg, #0d0e18 0 60%, #2d2227); padding-left: 228px; }
.dock { width: 1464px; height: 52px; padding-left: 2.500px; border-radius: 5px 5px 0 0; background: linear-gradient(90deg, #4d4f5e, #565a66 45%, #5b5763 65%, #685a60); display: flex; }
.app { width: 43.040px; height: 52px; overflow: visible; margin-top: 1.500px; }
.run { background: radial-gradient(circle at 50% 47px, #000 2px, transparent 2.500px); }
.bar { width: 1px; height: 38px; margin: 7px 10px 0; background: #2b2b30; }
.bar + .app { margin-left: -.5px; }
.dock text { font-family: "Open Sans", sans-serif; }
.d { text-anchor: middle; }
.b { font-weight: 700; font-stretch: 75%; }
.dock .m { font-family: "Liberation Mono", monospace; font-weight: 700; }
```
FILE: app.js
```js
// Layer list
const layers = [["Pages", "#9430c8"], ["Upper buttons", "#ff4a48"], ["Upper Text", "#ff4a48"], ["Main Text", "#46ff4a"], ["Graphics", "#ffff4a"], ["Actions", "#9430c8"]];
document.getElementById("layers").innerHTML = layers.map(([name, color], i) =>
  `<div class="layer${i === 2 ? " sel" : ""}"><svg width="13" height="13" viewBox="0 0 13 13"><path fill="#555" stroke="#c0c0c0" d="M1.500 1.500h10v10H6.500l-5-4.500z"/><path fill="#2d2d2d" stroke="#c0c0c0" d="M1.500 7h5v4.500"/></svg><span>${name}</span><i style="background:${color}"></i></div>`).join("");

// Frame grid: 12px per frame, 19px per layer
const X0 = 278, P = 12, Y0 = 905, N = 107, LINE = "#202020";
let s = "";
const rect = (x, y, w, h, fill) => { s += `<rect x="${x}" y="${y}" width="${w}" height="${h}" fill="${fill}"/>`; };
rect(X0, 863, 1294, 1, LINE);
rect(X0, 878, 1294, 1, LINE);
rect(X0, 904, 1294, 1, LINE);
for (let n = 1; n <= N; n++) {
  const end = X0 + P * n - 1;
  if (end < 1556) rect(end, 879, 1, 8, LINE);
  if (n % 5 === 4) rect(end, 864, 1, 14, LINE);
  if (n % 5 === 0) s += `<text x="${X0 + P * (n - 1) + 1}" y="899">${n}</text>`;
}
for (let k = 1; k <= 8; k++) s += `<text x="${411 + 144 * (k - 1)}" y="875" font-style="italic">${k}s</text>`;

const inRanges = (n, r) => r.some(([a, b]) => n >= a && n <= b);
const gLight = [[4, 6], [8, 20], [22, 23], [27, 27], [38, 46], [48, 52], [81, 82]];
const gTail = [16, 25, 31, 73, 80], gHeld = [30, 75, 76, 77, 78, 79];
const flags = { 2: [[34, 37], [71, 74]], 3: [[34, 37], [71, 74]] };
[84, 86, 88, 90, 94, 96, 98, 100, 102, 104, 106].forEach(n => flags[3].push([n, n]));
const alphas = [92, 97];

s += `<clipPath id="cells"><path d="M278 904h1278v106H278z"/></clipPath><g clip-path="url(#cells)">`;
rect(X0, 904, 1278, 105, LINE);
for (let r = 0; r < 6; r++) {
  const y = Y0 + 19 * r, h = r === 5 ? 9 : 18;
  if (r === 1 || r === 5) {
    rect(X0, y, 1278, h, r === 1 ? "#868686" : "#4e4e4e");
    for (let n = 1; n <= N; n++) rect(X0 + P * n - 1, y, 1, 2, LINE);
    if (r === 1) s += `<circle cx="283.500" cy="${y + 11}" r="3.200" fill="${LINE}"/>`;
    else s += `<text class="alpha" x="280" y="${y + 7}">α</text>`;
    continue;
  }
  for (let n = 1; n <= N; n++) {
    const x = X0 + P * (n - 1), cx = x + 5.500, cy = y + 11;
    const light = r !== 4 || inRanges(n, gLight);
    const tail = (r === 4 && gTail.includes(n)) || (r === 2 && n === 80);
    const held = r === 4 && gHeld.includes(n);
    const nextJoined = (r === 4 && (gTail.includes(n + 1) || gHeld.includes(n + 1))) || (r === 2 && n === 79);
    rect(x, y, nextJoined ? 12 : 11, h, light ? "#868686" : "#4e4e4e");
    if (nextJoined) rect(x + 11, y, 1, 1, LINE);
    if (tail) rect(x + 7, y + 9, 2, 5, LINE);
    else if (!held) s += `<circle cx="${cx}" cy="${cy}" r="${light ? 3.200 : 2.500}" fill="${light ? LINE : "none"}" stroke="${light ? "none" : LINE}" stroke-width="1.200"/>`;
    if (flags[r] && inRanges(n, flags[r])) s += `<path fill="#f00" d="M${x + 2.500} ${y + 6}h1.500l4 4-4 1.500v3h-1.500z"/><path stroke="#ddd" stroke-dasharray="1 1" d="M${x + 7} ${y + 13.500}h5"/>`;
    if (r === 3 && alphas.includes(n)) s += `<text class="alpha" x="${x + 2}" y="${y + 7}">α</text>`;
  }
}
s += `</g>`;
s += `<rect x="1562" y="906" width="4" height="87" rx="2" fill="#6c6c6c"/>`;
s += `<path fill="#2f70c0" stroke="#3b86dc" d="M674.500 864.500h10v36l-5 3.500-5-3.500z"/><path stroke="#3b86dc" d="M679.500 904v105"/>`;
document.getElementById("frames").innerHTML = s;
```
